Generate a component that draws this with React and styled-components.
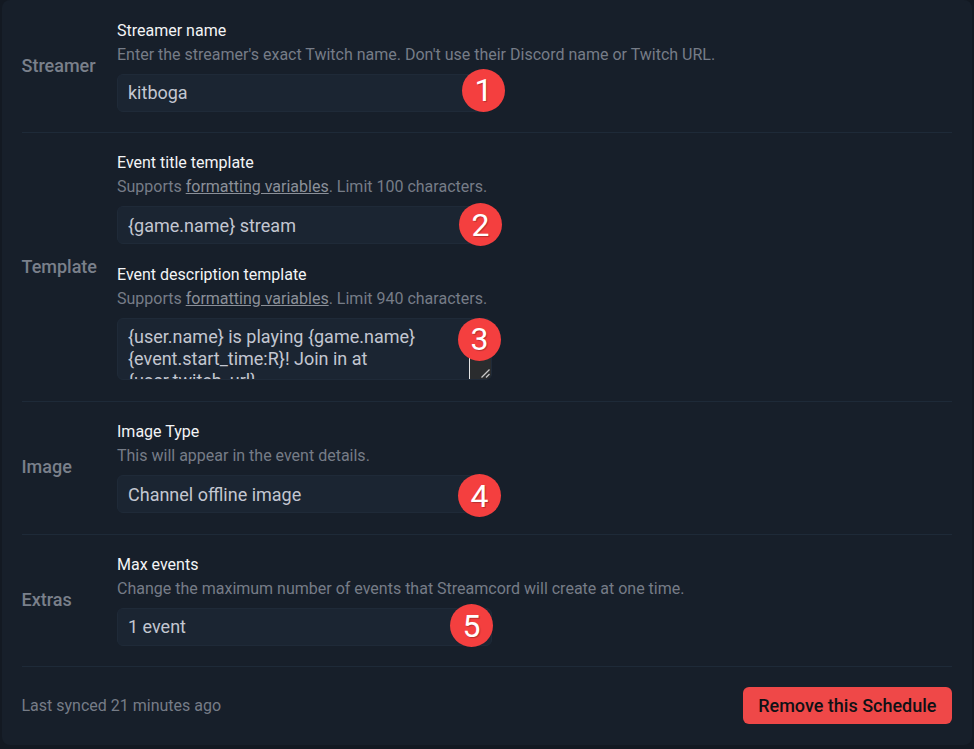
import styled, { createGlobalStyle } from 'styled-components';

const GlobalStyle = createGlobalStyle`
  html, body {
    margin: 0;
    padding: 0;
    background: #131922;
  }
  body {
    font-family: Roboto, "Liberation Sans", sans-serif;
  }
`;

const Panel = styled.div`
  box-sizing: border-box;
  width: 970.5px;
  height: 745px;
  margin-left: 1.5px;
  padding: 0 20px;
  background: #171f2a;
  border-radius: 8px;
  overflow: hidden;
`;

const Section = styled.section`
  display: grid;
  grid-template-columns: 95.5px 1fr;
  align-items: center;
  padding: 20px 0 20.4px;
  border-bottom: 1px solid #1e2a38;

  &:first-child {
    padding: 20.5px 0 19.9px;
  }
`;

const SectionName = styled.div`
  font-size: 18px;
  font-weight: 500;
  line-height: 24px;
  color: #7a808b;
`;

const Fields = styled.div`
  display: flex;
  flex-direction: column;
  gap: 20.4px;
`;

const Field = styled.div`
  display: flex;
  flex-direction: column;
`;

const FieldLabel = styled.label`
  font-size: 16px;
  font-weight: 400;
  line-height: 20px;
  color: #f3f4f6;
`;

const Hint = styled.p`
  margin: 4px 0 8.6px;
  font-size: 16px;
  line-height: 20.8px;
  color: #767c87;

  a {
    color: #8b9099;
    text-decoration: underline;
  }
`;

const InputWrap = styled.div`
  position: relative;
  width: 375px;
`;

const TextInput = styled.input`
  display: block;
  box-sizing: border-box;
  width: 100%;
  height: 38px;
  padding: 0 10px;
  background: #1b2532;
  border: 1px solid #1f2a38;
  border-radius: 6px;
  color: #c3c7d1;
  font: 400 18px/24px Roboto, "Liberation Sans", sans-serif;
  outline: none;
`;

const TextArea = styled.textarea`
  display: block;
  box-sizing: border-box;
  width: 100%;
  height: 62.4px;
  padding: 7px 33px 0 10px;
  background: #1b2532;
  border: 1px solid #1f2a38;
  border-radius: 6px;
  color: #c3c7d1;
  font: 400 18px/22px Roboto, "Liberation Sans", sans-serif;
  outline: none;
  resize: none;
  overflow: hidden;
`;

const ResizeCorner = styled.span`
  position: absolute;
  right: 1px;
  bottom: 1px;
  width: 22px;
  height: 40px;
  box-sizing: border-box;
  display: flex;
  align-items: flex-end;
  justify-content: flex-end;
  background: #2a2c2e;
  border-left: 1px solid #e4e4e4;
  border-bottom-right-radius: 5px;
`;

const Badge = styled.span`
  position: absolute;
  left: ${({ $x }) => $x}px;
  top: ${({ $y }) => $y}px;
  z-index: 1;
  display: flex;
  align-items: center;
  justify-content: center;
  width: 43px;
  height: 43px;
  border-radius: 50%;
  background: #f43f3f;
  color: #fff;
  font-size: 32px;
  font-weight: 400;
  line-height: 1;
  text-shadow: 1px 1px 1px rgba(0, 0, 0, 0.25);
`;

const Footer = styled.div`
  display: flex;
  align-items: center;
  justify-content: space-between;
  padding-top: 20px;
`;

const Synced = styled.span`
  font-size: 16px;
  line-height: 20px;
  color: #767c87;
`;

const RemoveButton = styled.button`
  height: 37px;
  padding: 0 15.5px;
  border: 0;
  border-radius: 6px;
  background: #ef4848;
  color: #0f1115;
  font: 500 18px/24px Roboto, "Liberation Sans", sans-serif;
`;

export default function App() {
  return (
    <>
      <GlobalStyle />
      <Panel>
        <Section>
          <SectionName>Streamer</SectionName>
          <Field>
            <FieldLabel>Streamer name</FieldLabel>
            <Hint>Enter the streamer's exact Twitch name. Don't use their Discord name or Twitch URL.</Hint>
            <InputWrap>
              <TextInput readOnly value="kitboga" />
              <Badge $x={345} $y={-5}>1</Badge>
            </InputWrap>
          </Field>
        </Section>
        <Section>
          <SectionName>Template</SectionName>
          <Fields>
            <Field>
              <FieldLabel>Event title template</FieldLabel>
              <Hint>Supports <a href="#vars">formatting variables</a>. Limit 100 characters.</Hint>
              <InputWrap>
                <TextInput readOnly value="{game.name} stream" />
                <Badge $x={342} $y={-3}>2</Badge>
              </InputWrap>
            </Field>
            <Field>
              <FieldLabel>Event description template</FieldLabel>
              <Hint>Supports <a href="#vars">formatting variables</a>. Limit 940 characters.</Hint>
              <InputWrap>
                <TextArea readOnly value="{user.name} is playing {game.name} {event.start_time:R}! Join in at {user.twitch_url}" />
                <ResizeCorner>
                  <svg width="12" height="12" viewBox="0 0 12 12" fill="none" stroke="#c8c8c8" strokeWidth="1.2">
                    <path d="M2.5 10.5 L10.5 2.5" />
                    <path d="M7 10.5 L10.5 7" />
                  </svg>
                </ResizeCorner>
                <Badge $x={341} $y={0}>3</Badge>
              </InputWrap>
            </Field>
          </Fields>
        </Section>
        <Section>
          <SectionName>Image</SectionName>
          <Field>
            <FieldLabel>Image Type</FieldLabel>
            <Hint>This will appear in the event details.</Hint>
            <InputWrap>
              <TextInput readOnly value="Channel offline image" />
              <Badge $x={341} $y={-1}>4</Badge>
            </InputWrap>
          </Field>
        </Section>
        <Section>
          <SectionName>Extras</SectionName>
          <Field>
            <FieldLabel>Max events</FieldLabel>
            <Hint>Change the maximum number of events that Streamcord will create at one time.</Hint>
            <InputWrap>
              <TextInput readOnly value="1 event" />
              <Badge $x={333} $y={-3.5}>5</Badge>
            </InputWrap>
          </Field>
        </Section>
        <Footer>
          <Synced>Last synced 21 minutes ago</Synced>
          <RemoveButton>Remove this Schedule</RemoveButton>
        </Footer>
      </Panel>
    </>
  );
}
